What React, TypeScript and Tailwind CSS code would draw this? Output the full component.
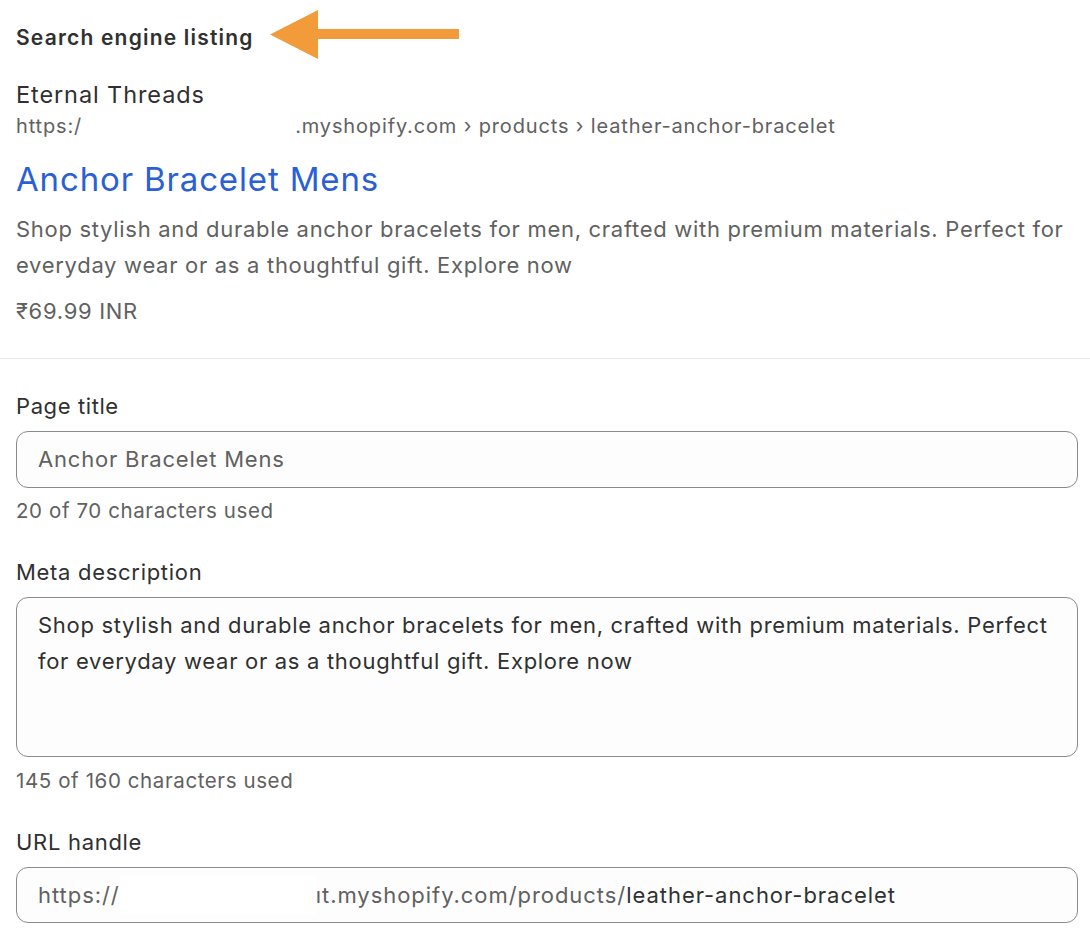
import React from "react";

function Arrow() {
  return (
    <svg width="190" height="50" viewBox="0 0 190 50" className="shrink-0">
      <polygon points="0,24.5 48,0 48,49" fill="#f19b3b" />
      <rect x="46" y="19" width="143" height="10" fill="#f19b3b" />
    </svg>
  );
}

export default function App() {
  return (
    <div className="w-[1090px] h-[944px] overflow-hidden bg-white font-['Inter',sans-serif] text-[#303030]">
      <div className="pl-4 pr-3 pt-[10px] pb-[29px]">
        <div className="flex items-start gap-4">
          <h2 className="mt-[14px] text-[21px] leading-[28px] font-semibold tracking-[1.2px] text-[#303030]">
            Search engine listing
          </h2>
          <Arrow />
        </div>
        <div className="mt-[19px] text-[23.5px] leading-[32px] tracking-[0.9px] text-[#303030]">Eternal Threads</div>
        <div className="mt-[1px] flex items-center text-[20px] leading-[28px] tracking-[0.85px] text-[#616161] whitespace-nowrap">
          <span>https:/</span>
          <span className="inline-block w-[213px] h-[26px] bg-white" />
          <span>.myshopify.com › products › leather-anchor-bracelet</span>
        </div>
        <div className="mt-[17px] text-[33px] leading-[44px] tracking-[0.85px] text-[#2b5fd4]">Anchor Bracelet Mens</div>
        <p className="mt-[10px] text-[22px] leading-[36px] tracking-[0.7px] text-[#616161]">
          Shop stylish and durable anchor bracelets for men, crafted with premium materials. Perfect for
          everyday wear or as a thoughtful gift. Explore now
        </p>
        <div className="mt-[10px] text-[22px] leading-[36px] tracking-[0.7px] text-[#616161]">₹69.99 INR</div>
      </div>
      <div className="border-t border-[#ebebeb]" />
      <div className="pl-4 pr-3 pt-[31px]">
        <label className="block text-[22px] leading-[32px] tracking-[0.6px] text-[#303030]">Page title</label>
        <div className="mt-[9px] h-[57px] rounded-[12px] border border-[#8a8a8a] bg-[#fdfdfd] pl-[21px] flex items-center text-[22px] tracking-[0.8px] text-[#616161]">
          Anchor Bracelet Mens
        </div>
        <div className="mt-[9px] text-[20.5px] leading-[28px] tracking-[0.6px] text-[#616161]">20 of 70 characters used</div>

        <label className="mt-[31px] block text-[22px] leading-[32px] tracking-[0.7px] text-[#303030]">Meta description</label>
        <div className="mt-[9px] h-[160px] rounded-[12px] border border-[#8a8a8a] bg-[#fdfdfd] pl-[21px] pr-4 pt-[9px] text-[22px] leading-[36px] tracking-[0.7px] text-[#303030]">
          Shop stylish and durable anchor bracelets for men, crafted with premium materials. Perfect for
          everyday wear or as a thoughtful gift. Explore now
        </div>
        <div className="mt-[10px] text-[20.5px] leading-[28px] tracking-[0.6px] text-[#616161]">145 of 160 characters used</div>

        <label className="mt-[31px] block text-[22px] leading-[32px] tracking-[0.7px] text-[#303030]">URL handle</label>
        <div className="mt-[9px] h-[56px] rounded-[12px] border border-[#8a8a8a] bg-[#fdfdfd] pl-[21px] flex items-center text-[22px] tracking-[0.95px] whitespace-nowrap">
          <span className="text-[#616161]">https://</span>
          <span className="inline-block w-[196px] h-[38px] bg-white" />
          <span className="text-[#616161]">ıt.myshopify.com/products/</span>
          <span className="text-[#303030]">leather-anchor-bracelet</span>
        </div>
      </div>
    </div>
  );
}
